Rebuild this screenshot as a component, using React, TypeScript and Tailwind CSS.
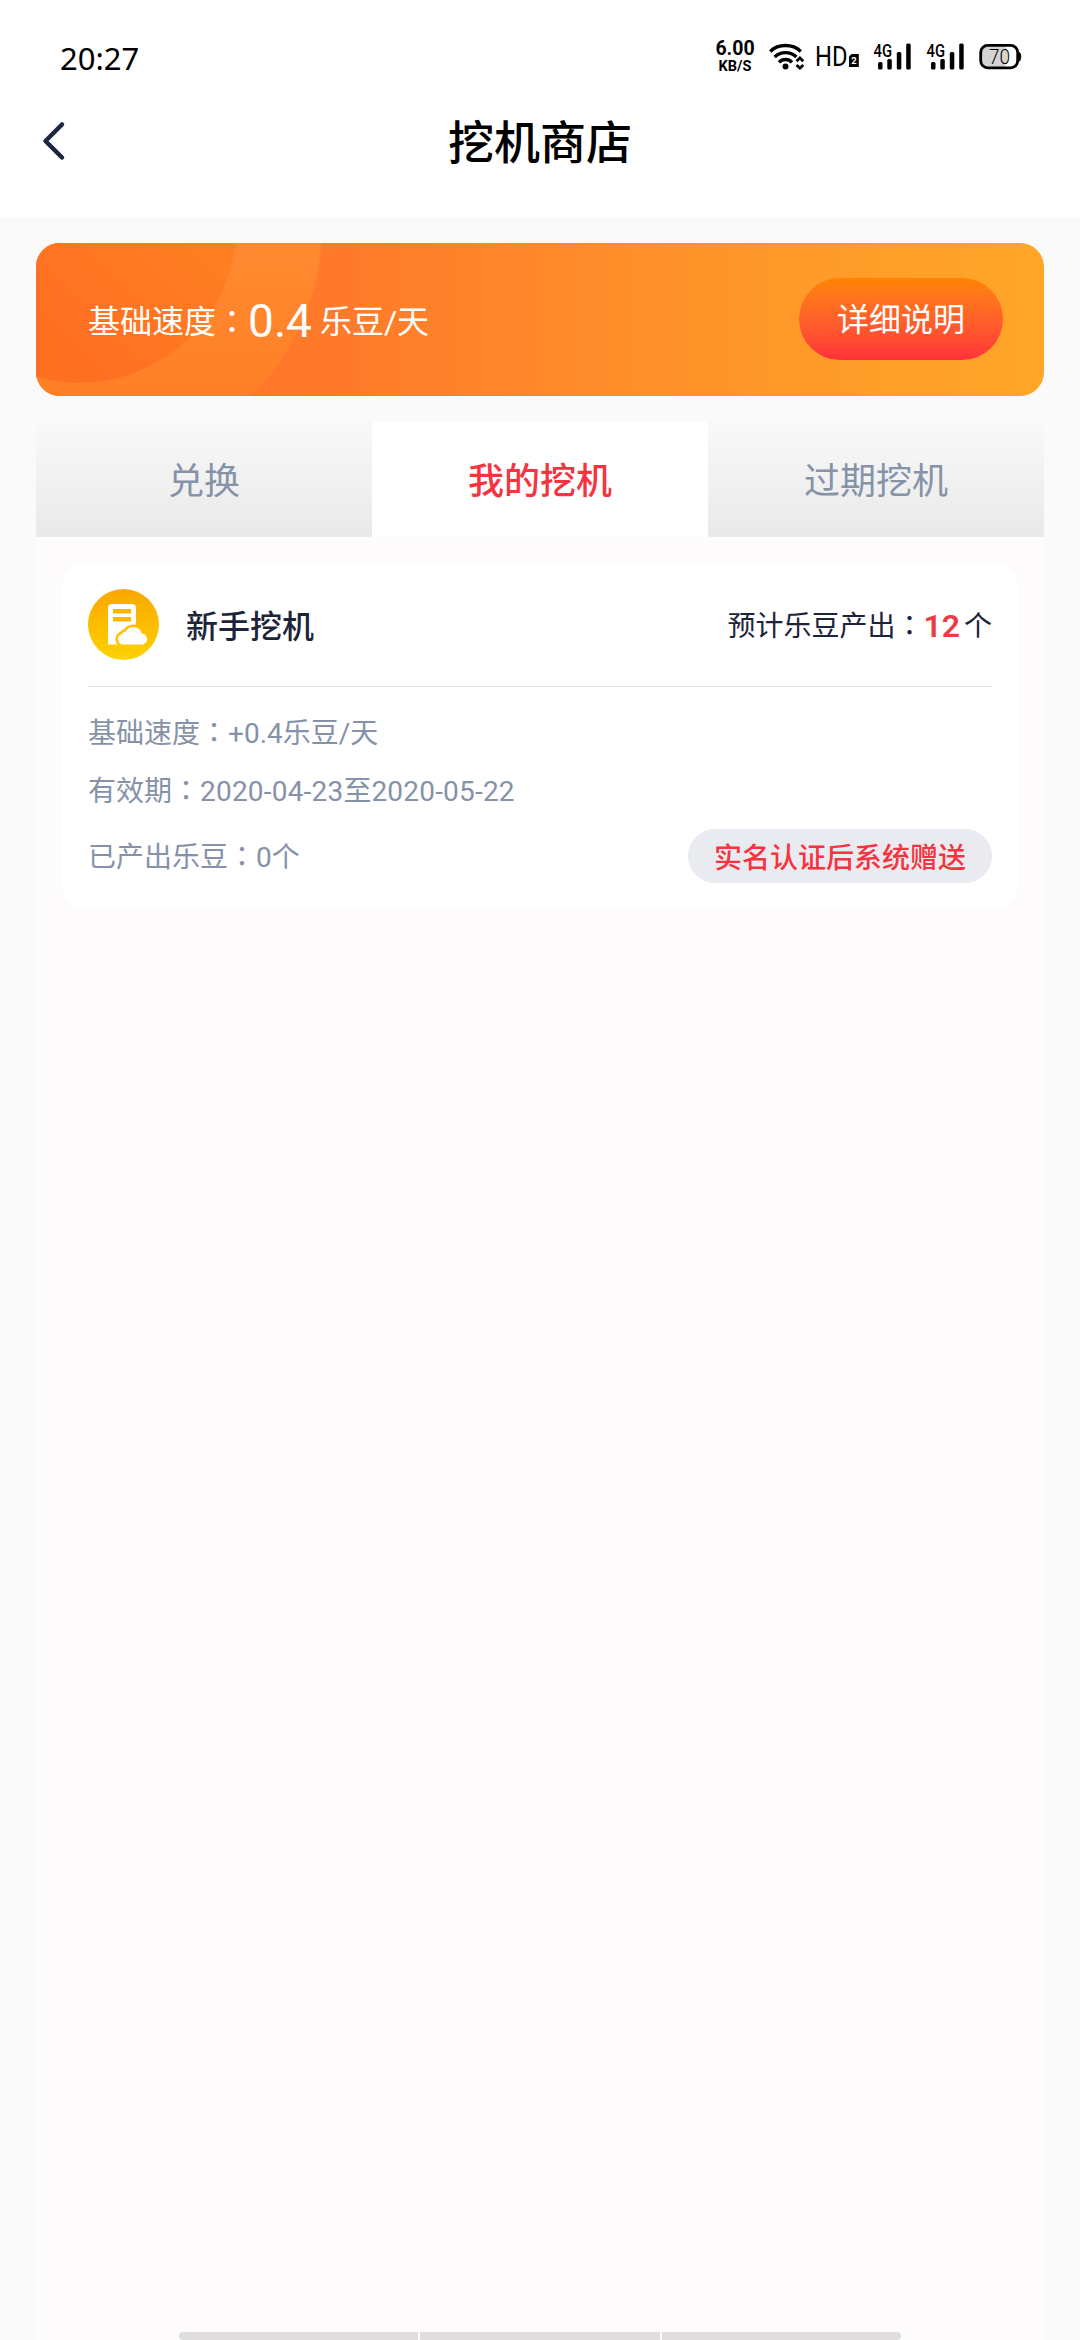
import { useState } from "react";

interface TabDto {
  id: number;
  name: string;
}

interface MachineDto {
  id: number;
  name: string;
  speed: string;
  expected: number;
  start: string;
  end: string;
  produced: number;
  source: string;
}

const tabs: TabDto[] = [
  { id: 0, name: "兑换" },
  { id: 1, name: "我的挖机" },
  { id: 2, name: "过期挖机" },
];

const machines: MachineDto[] = [
  {
    id: 1,
    name: "新手挖机",
    speed: "+0.4",
    expected: 12,
    start: "2020-04-23",
    end: "2020-05-22",
    produced: 0,
    source: "实名认证后系统赠送",
  },
];

// full-width colon, centred in its box
const Colon = () => (
  <span className="font-['Noto_Sans_CJK_TC',sans-serif] leading-none">：</span>
);

const SignalIcon = () => (
  <svg className="overflow-visible" width="39" height="30" viewBox="0 0 39 30">
    <text
      x="0.5"
      y="14.5"
      fontSize="18"
      fontWeight="500"
      textLength="18.5"
      lengthAdjust="spacingAndGlyphs"
      className="font-[Roboto,sans-serif]"
    >
      4G
    </text>
    <rect x="5" y="20" width="4.5" height="7.5" rx="1.5" />
    <rect x="14.3" y="17" width="4.5" height="10.5" rx="1.5" />
    <rect x="23.8" y="10" width="4.5" height="17.5" rx="1.5" />
    <rect x="33.2" y="1.5" width="4.5" height="26" rx="1.5" />
  </svg>
);

const StatusBar = () => (
  <div className="flex h-[112px] justify-between pl-[60px] pr-[57px] text-black">
    <div className="mt-[36px] font-['Noto_Sans',sans-serif] text-[31px] leading-[44px]">
      20:27
    </div>
    <div className="mt-[42px] flex h-[30px]">
      <div className="w-[40px] whitespace-nowrap text-center font-[Roboto,sans-serif] font-bold">
        <div className="text-[19.5px] leading-[14px]">6.00</div>
        <div className="mt-[4px] text-[14.5px] leading-[13px]">KB/S</div>
      </div>
      <svg
        className="ml-[14px]"
        width="36"
        height="30"
        viewBox="0 0 36 30"
        fill="none"
        stroke="currentColor"
      >
        <g strokeWidth="3.4">
          <path d="M1.2 9.4C9.5 1.6 23.5 1.6 31.8 9.4" />
          <path d="M5.6 15C11.5 9.2 21.5 9.2 27.4 15" />
          <path d="M10 20.4C13.5 16.6 19.5 16.6 23 20.4" />
        </g>
        <circle cx="16.5" cy="24.6" r="3" fill="currentColor" stroke="none" />
        <path d="M27.5 19.2l3.4-3.2 3.4 3.2M27.5 23l3.4 3.2 3.4-3.2" strokeWidth="2.8" />
      </svg>
      <svg className="ml-[11px] overflow-visible" width="45" height="30" viewBox="0 0 45 30">
        <text
          x="-1"
          y="24.3"
          fontSize="28"
          textLength="32.5"
          lengthAdjust="spacingAndGlyphs"
          className="font-[Roboto,sans-serif]"
        >
          HD
        </text>
        <path d="M35.5 12H42.800v13H33V14.500z" />
        <text
          x="35.3"
          y="22"
          fontSize="9.5"
          fontWeight="700"
          fill="#fff"
          className="font-[Roboto,sans-serif]"
        >
          2
        </text>
      </svg>
      <div className="ml-[12px] flex gap-[14px]">
        <SignalIcon />
        <SignalIcon />
      </div>
      <svg className="ml-[14px]" width="44" height="30" viewBox="0 0 44 30">
        <rect x="2" y="4" width="26" height="21" rx="5" fill="#d4d4d4" />
        <rect
          x="1.7"
          y="3.4"
          width="37"
          height="22.4"
          rx="7"
          fill="none"
          stroke="currentColor"
          strokeWidth="2.8"
        />
        <path d="M39.500 10c3 0.500 3 9 0 9.500z" stroke="currentColor" />
        <text
          x="10"
          y="21.5"
          fontSize="20"
          fontWeight="300"
          textLength="21"
          lengthAdjust="spacingAndGlyphs"
          className="font-[Roboto,sans-serif]"
        >
          70
        </text>
      </svg>
    </div>
  </div>
);

const cloud =
  "M35.5 55.500a5.300 5.300 0 0 1-1.300-10.500 3 3 0 0 1 3.300-2.300 8.800 8.800 0 0 1 16.300 1.800 5.600 5.600 0 0 1 1 11z";

const MachineIcon = () => (
  <svg width="71" height="71" viewBox="0 0 71 71">
    <defs>
      <linearGradient id="coin" gradientUnits="userSpaceOnUse" x1="0" y1="0" x2="0" y2="71">
        <stop offset="0" stopColor="#faa700" />
        <stop offset="1" stopColor="#fed200" />
      </linearGradient>
    </defs>
    <circle cx="35.5" cy="35.5" r="35.5" fill="url(#coin)" />
    <path d="M20 55.500V19a4 4 0 0 1 4-4h20a4 4 0 0 1 4 4v36.500z" fill="#fff" />
    <path d="M25 20h18v4.500H25zM25 28h18v4.500H25z" fill="url(#coin)" />
    <path d={cloud} fill="url(#coin)" stroke="url(#coin)" strokeWidth="5" />
    <path d={cloud} fill="#fff" />
  </svg>
);

const SpeedBanner = () => (
  <div className="relative mx-[36px] mt-[26px] flex h-[153px] items-center justify-between overflow-hidden rounded-[24px] bg-[linear-gradient(90deg,#ff702a_0%,#ff7a2b_30%,#ff882a_50%,#ff9829_72%,#ffa628_100%)] pl-[52px] pr-[41px] text-white">
    {/* rings in the top left corner */}
    <svg className="absolute left-0 top-0" width="300" height="153" viewBox="0 0 300 153">
      <defs>
        <linearGradient id="ring" gradientUnits="userSpaceOnUse" x1="0" y1="153" x2="0" y2="0">
          <stop offset="0" stopColor="#ff7f26" />
          <stop offset="1" stopColor="#ff8a30" />
        </linearGradient>
        <linearGradient id="disc" gradientUnits="userSpaceOnUse" x1="60" y1="130" x2="190" y2="0">
          <stop offset="0" stopColor="#ff6f22" />
          <stop offset="1" stopColor="#ff8022" />
        </linearGradient>
      </defs>
      <circle cx="43" cy="-18" r="243" fill="url(#ring)" />
      <circle cx="43" cy="-18" r="158" fill="url(#disc)" />
    </svg>
    <div className="relative flex items-center pt-[4px] text-[32px] leading-[48px]">
      <div>
        基础速度
        <Colon />
      </div>
      <div className="pb-[2px] text-[46px]">0.4</div>
      <div className="ml-[8px]">乐豆/天</div>
    </div>
    <button className="relative mb-[2px] h-[82px] w-[204px] rounded-full bg-linear-to-b from-[#ff8400] to-[#ff3038] pt-[3px] text-[32px]">
      详细说明
    </button>
  </div>
);

const MachineCard = ({ machine }: { machine: MachineDto }) => (
  <div className="h-[346px] rounded-[24px] bg-white px-[26px] pt-[26px] text-[28px] text-[#8592a8]">
    <div className="flex h-[98px] items-start border-b border-[#e3e3e5] text-[#1d2439]">
      <MachineIcon />
      <div className="ml-[27px] mt-[15px] text-[32px] font-medium leading-[46px]">
        {machine.name}
      </div>
      <div className="ml-auto mt-[15px] flex leading-[46px]">
        <span>
          预计乐豆产出
          <Colon />
        </span>
        <span className="text-[32px] font-semibold leading-[44px] text-[#ef3a43]">
          {machine.expected}
        </span>
        <span className="ml-[4px]">个</span>
      </div>
    </div>
    <div className="mt-[26px] leading-[42px]">
      基础速度
      <Colon />
      {machine.speed}乐豆/天
    </div>
    <div className="mt-[16px] leading-[42px]">
      有效期
      <Colon />
      <span className="tracking-[0.2px]">{machine.start}</span>至
      <span className="tracking-[0.2px]">{machine.end}</span>
    </div>
    <div className="mt-[16px] flex h-[54px] items-center justify-between">
      <div className="pt-[4px]">
        已产出乐豆
        <Colon />
        {machine.produced}个
      </div>
      <div className="h-[54px] rounded-full bg-[#eaebf0] px-[26px] pt-[3px] font-medium leading-[53px] text-[#f5343f]">
        {machine.source}
      </div>
    </div>
  </div>
);

const App = () => {
  const [current, setCurrent] = useState<number>(1);

  return (
    <div className="flex h-[2340px] w-[1080px] flex-col bg-[#fafafa] font-[Roboto,'Noto_Sans_CJK_SC',sans-serif]">
      <header className="h-[217px] bg-white">
        <StatusBar />
        <div className="grid grid-cols-[200px_1fr_200px] items-start">
          <svg
            className="ml-[40px]"
            width="28"
            height="60"
            viewBox="0 0 28 60"
            fill="none"
            stroke="#1d2742"
            strokeWidth="4.5"
            strokeLinecap="round"
            strokeLinejoin="round"
          >
            <path d="M22 12.500L5.500 29L22 45.500" />
          </svg>
          <h1 className="pt-[1px] text-center text-[46px] font-medium leading-[60px] text-black">
            挖机商店
          </h1>
        </div>
      </header>

      <SpeedBanner />

      <main className="mx-[36px] mt-[26px] flex flex-1 flex-col bg-[#fdfbfc]">
        <div className="grid h-[115px] grid-cols-3 text-[36px]">
          {tabs.map((tab) => (
            <button
              key={tab.id}
              onClick={() => setCurrent(tab.id)}
              className={
                tab.id === current
                  ? "bg-white pt-[5px] font-medium text-[#f5343f]"
                  : "bg-linear-to-b from-[#f9f9f9] to-[#e9e9e9] pt-[5px] text-[#8592a8]"
              }
            >
              {tab.name}
            </button>
          ))}
        </div>
        <div className="flex-1 p-[26px]">
          {machines.map((machine) => (
            <MachineCard key={machine.id} machine={machine} />
          ))}
        </div>
        {/* system navigation hint */}
        <div className="mx-[143px] grid h-[8px] grid-cols-3 gap-[2px] overflow-hidden rounded-full">
          <div className="bg-[#dedcdd]" />
          <div className="bg-[#dedcdd]" />
          <div className="bg-[#dedcdd]" />
        </div>
      </main>
    </div>
  );
};

export default App;
